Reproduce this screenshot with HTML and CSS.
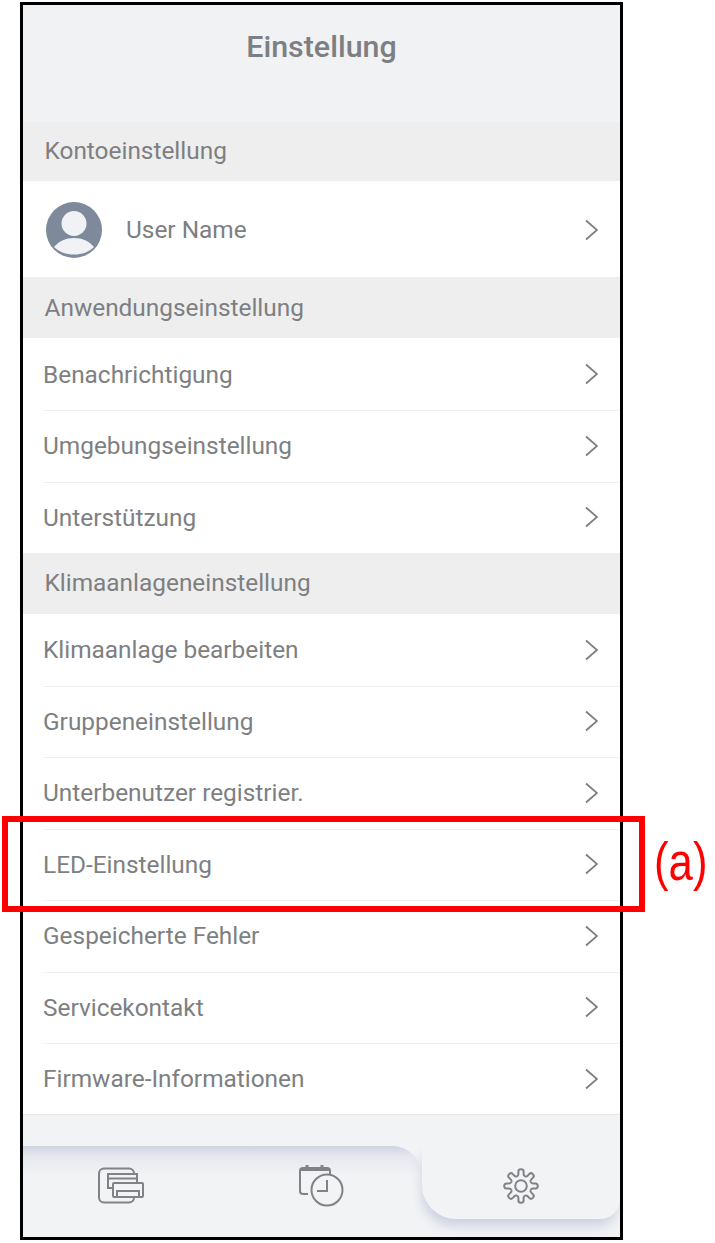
FILE: index.html
```html
<!DOCTYPE html>
<html lang="en">
<head>
  <meta charset="UTF-8" />
  <title>Einstellung</title>
  <link rel="stylesheet" href="styles.css">
</head>
<body>
  <svg class="defs" width="0" height="0">
    <defs>
      <path id="chevronPath" d="M1 1.500L12 11 1 20.500"/>
      <path id="gearTooth" d="M-4-9.700C-3-10.100-2.600-11-2.600-12V-14.500C-2.600-17.500 2.600-17.500 2.600-14.500V-12C2.600-11 3-10.100 4-9.700"/>
    </defs>
  </svg>

  <div class="phone">
    <header class="title-bar"><h1>Einstellung</h1></header>

    <div class="section section-first">Kontoeinstellung</div>
    <div class="row user-row">
      <svg class="avatar" viewBox="0 0 56 56">
        <circle cx="28" cy="28" r="28" fill="#7e8a9c"/>
        <circle cx="28" cy="21.500" r="12.500" fill="#f1f2f5"/>
        <path d="M8 45c5-6 12-9 20-9s15 3 20 9c-5 5-12 7.500-20 7.500S13 50 8 45z" fill="#f1f2f5"/>
      </svg>
      <span class="user-name">User Name</span>
      <svg class="chevron" viewBox="0 0 13 22"><use href="#chevronPath"/></svg>
    </div>

    <div class="section">Anwendungseinstellung</div>
    <div class="row row-first"><span>Benachrichtigung</span><svg class="chevron" viewBox="0 0 13 22"><use href="#chevronPath"/></svg></div>
    <div class="row"><span>Umgebungseinstellung</span><svg class="chevron" viewBox="0 0 13 22"><use href="#chevronPath"/></svg></div>
    <div class="row"><span>Unterstützung</span><svg class="chevron" viewBox="0 0 13 22"><use href="#chevronPath"/></svg></div>

    <div class="section section-third">Klimaanlageneinstellung</div>
    <div class="row row-first"><span>Klimaanlage bearbeiten</span><svg class="chevron" viewBox="0 0 13 22"><use href="#chevronPath"/></svg></div>
    <div class="row"><span>Gruppeneinstellung</span><svg class="chevron" viewBox="0 0 13 22"><use href="#chevronPath"/></svg></div>
    <div class="row"><span>Unterbenutzer registrier.</span><svg class="chevron" viewBox="0 0 13 22"><use href="#chevronPath"/></svg></div>
    <div class="row"><span>LED-Einstellung</span><svg class="chevron" viewBox="0 0 13 22"><use href="#chevronPath"/></svg></div>
    <div class="row"><span>Gespeicherte Fehler</span><svg class="chevron" viewBox="0 0 13 22"><use href="#chevronPath"/></svg></div>
    <div class="row"><span>Servicekontakt</span><svg class="chevron" viewBox="0 0 13 22"><use href="#chevronPath"/></svg></div>
    <div class="row row-end"><span>Firmware-Informationen</span><svg class="chevron" viewBox="0 0 13 22"><use href="#chevronPath"/></svg></div>

    <nav class="footer">
      <div class="tabs">
        <div class="tab">
          <svg class="tab-icon" width="46" height="37" viewBox="0 0 46 37">
            <rect x="1" y="1.500" width="35" height="34" rx="5"/>
            <rect x="10" y="7" width="29" height="14" fill="#f2f3f5"/>
            <path d="M10 11.500h29"/>
            <rect x="15" y="16" width="30" height="14" rx="1" fill="#f2f3f5"/>
            <path d="M19 30v-6h22v6"/>
          </svg>
        </div>
        <div class="tab tab-clock">
          <svg class="tab-icon" width="46" height="43" viewBox="0 0 46 43">
            <path d="M10 30H5a3 3 0 0 1-3-3V7a3 3 0 0 1 3-3h24a3 3 0 0 1 3 3v6"/>
            <path d="M2 5.500h30" stroke-width="3"/>
            <path d="M9 1v5M24 1v5" stroke-width="3"/>
            <circle cx="29" cy="26" r="15.500" fill="#f2f3f5"/>
            <path d="M29 16v11h-10"/>
          </svg>
        </div>
      </div>
      <div class="tab-active">
        <svg class="tab-icon" width="36" height="36" viewBox="-18 -18 36 36">
          <use href="#gearTooth"/>
          <use href="#gearTooth" transform="rotate(45)"/>
          <use href="#gearTooth" transform="rotate(90)"/>
          <use href="#gearTooth" transform="rotate(135)"/>
          <use href="#gearTooth" transform="rotate(180)"/>
          <use href="#gearTooth" transform="rotate(225)"/>
          <use href="#gearTooth" transform="rotate(270)"/>
          <use href="#gearTooth" transform="rotate(315)"/>
          <circle cx="0" cy="0" r="5.800"/>
        </svg>
      </div>
    </nav>
  </div>

  <div class="callout-box"></div>
  <div class="callout-label">(a)</div>
</body>
</html>
```

FILE: styles.css
```css
body {
  margin: 0;
  width: 715px;
  height: 1243px;
  position: relative;
  background: #fff;
  font-family: Roboto, Arial, sans-serif;
  color: #7d7f82;
  overflow: hidden;
}
.defs {
  position: absolute;
}
.phone {
  box-sizing: border-box;
  width: 603px;
  height: 1238px;
  margin: 2px 0 0 20px;
  border: 3px solid #000;
  background: #fff;
  overflow: hidden;
}
.title-bar {
  height: 117px;
  background: #f1f2f4;
}
.title-bar h1 {
  margin: 0;
  padding-top: 22px;
  text-align: center;
  font-size: 30.400px;
  line-height: 40px;
  font-weight: 500;
}
.section {
  height: 61px;
  padding-left: 21.500px;
  background: #eeeeee;
  font-size: 24.400px;
  line-height: 61px;
}
.section-first {
  height: 59px;
  line-height: 58px;
}
.section-third {
  height: 60.500px;
  line-height: 60px;
}
.row {
  display: flex;
  align-items: center;
  justify-content: space-between;
  box-sizing: border-box;
  height: 71.500px;
  margin-left: 20px;
  padding: 0 22px 1px 0;
  border-top: 1px solid #f0f0f0;
  font-size: 24.400px;
}
.row-first {
  height: 72px;
  padding-bottom: 0;
  border-top: none;
}
.row-end {
  height: 71px;
}
.user-row {
  height: 96px;
  padding-top: 2px;
  padding-bottom: 0;
  border-top: none;
}
.avatar {
  width: 56px;
  height: 56px;
  margin-left: 3px;
  flex: none;
}
.user-name {
  flex: 1;
  margin: 0 0 2px 24px;
}
.chevron {
  width: 13px;
  height: 22px;
  flex: none;
  fill: none;
  stroke: #7c7e82;
  stroke-width: 1.800;
}
.footer {
  display: flex;
  height: 123px;
  border-top: 1px solid #e8e8ea;
  background: #f2f3f5;
  overflow: hidden;
}
.tabs {
  display: flex;
  flex: none;
  width: 400px;
  height: 80px;
  margin: 31px 0 0 -2px;
  padding-right: 1px;
  border-top-right-radius: 30px;
  background: linear-gradient(#cfd3e2, #e6e8ee 10px, #f2f3f5 30px);
}
.tab {
  flex: 1;
  display: flex;
  justify-content: center;
  padding-top: 21px;
}
.tab-clock {
  padding-top: 18px;
}
.tab-active {
  flex: 1;
  display: flex;
  justify-content: center;
  align-items: flex-start;
  padding-top: 22px;
  height: 51px;
  margin-top: 31px;
  background: #f2f3f5;
  border-radius: 0 0 20px 34px;
  box-shadow: -2px 9px 12px -2px #ccd0e0;
}
.tab-icon {
  fill: none;
  stroke: #808285;
  stroke-width: 2;
}
.callout-box {
  position: absolute;
  left: 2px;
  top: 816px;
  box-sizing: border-box;
  width: 643px;
  height: 96px;
  border: 6px solid #ff0000;
}
.callout-label {
  position: absolute;
  left: 654px;
  top: 830px;
  font-family: "Liberation Sans", Arial, sans-serif;
  font-size: 54px;
  line-height: 62px;
  color: #ff0000;
  transform: scaleX(0.81);
  transform-origin: left;
}
```
